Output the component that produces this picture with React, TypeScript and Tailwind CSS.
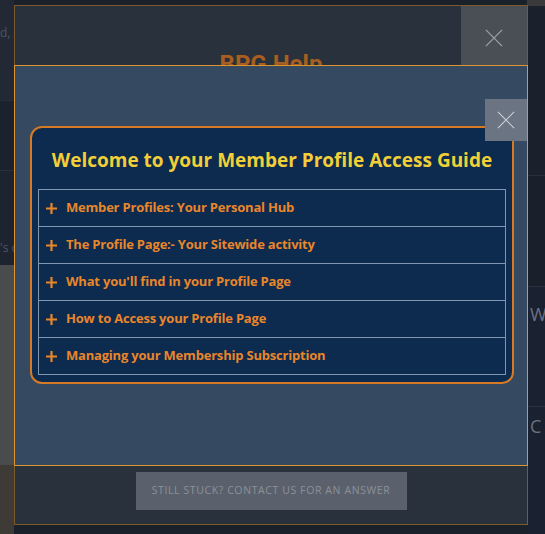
const items = [
  "Member Profiles: Your Personal Hub",
  "The Profile Page:- Your Sitewide activity",
  "What you'll find in your Profile Page",
  "How to Access your Profile Page",
  "Managing your Membership Subscription",
];

function CloseX({ size, color }: { size: number; color: string }) {
  return (
    <svg width={size} height={size} viewBox="0 0 20 20" fill="none">
      <path d="M1 1L19 19M19 1L1 19" stroke={color} strokeWidth="1.3" />
    </svg>
  );
}

function PlusSign() {
  return (
    <svg width="11" height="11" viewBox="0 0 11 11" fill="none" className="shrink-0">
      <path d="M5.5 0V11M0 5.5H11" stroke="#e8862b" strokeWidth="2.2" />
    </svg>
  );
}

export default function App() {
  return (
    <div className="relative w-[545px] h-[534px] overflow-hidden bg-[#1c232e] font-['Open_Sans',sans-serif]">
      {/* page underneath the modals */}
      <div className="flex h-full">
        <div className="w-[14px] flex flex-col overflow-hidden whitespace-nowrap">
          <div className="h-[100px] bg-[#222934] pt-[24px] text-[12px] text-[#4b5563]">d, s</div>
          <div className="h-[70px] bg-[#1b222d] border-t border-[#262d38]"></div>
          <div className="h-[95px] bg-[#1d2430] border-t border-[#2a313b] pt-[68px] text-[12px] text-[#4b5563]">'s c</div>
          <div className="h-[200px] bg-[#4a4b4c]"></div>
          <div className="flex-1 bg-[#3e3b36]"></div>
        </div>
        <div className="flex-1 bg-[#1b212b]"></div>
        <div className="w-[18px] flex flex-col overflow-hidden whitespace-nowrap">
          <div className="h-[6px] bg-[#3b3a3a]"></div>
          <div className="h-[170px] bg-[#1a212c] border-b border-[#2a313b]"></div>
          <div className="h-[110px] bg-[#19202b]"></div>
          <div className="h-[120px] bg-[#1a2130] border-t border-[#2c3340] pt-[18px] pl-[3px] text-[18px] leading-none text-[#6b7280]">W</div>
          <div className="flex-1 bg-[#1a2130] border-t border-[#2c3340] pt-[10px] pl-[3px] text-[18px] leading-none text-[#6b7280]">C</div>
        </div>
      </div>

      {/* outer help modal */}
      <div className="absolute left-[14px] top-[5px] w-[514px] h-[520px] border border-[#7d5a2c] bg-[#29313c] flex flex-col items-center">
        <button className="absolute right-0 top-0 w-[66px] h-[59px] bg-[#4a4e55] flex items-center justify-center pt-[4px]">
          <CloseX size={18} color="#9fa3a9" />
        </button>
        <h2 className="mt-[40px] text-[24px] font-bold text-[#a85e1e] font-['Roboto',sans-serif]">BPG Help</h2>
        <div className="mt-auto mb-[14px]">
          <button className="w-[271px] h-[38px] bg-[#5a616c] text-[10.5px] tracking-[0.6px] whitespace-nowrap text-[#8b9199] uppercase">
            Still stuck? Contact us for an answer
          </button>
        </div>
      </div>

      {/* inner guide modal */}
      <div className="absolute left-[14px] top-[65px] w-[514px] h-[401px] border border-[#df952f] bg-[#354a60] pt-[60px] pl-[15px] pr-[13px]">
        <button className="absolute right-0 top-[33px] w-[42px] h-[42px] bg-[#6b7482] flex items-center justify-center">
          <CloseX size={18} color="#c9cdd3" />
        </button>
        <div className="rounded-[12px] border-2 border-[#d67a26] bg-[#0d2a4f] px-[6px] pt-[20px] pb-[7px]">
          <h1 className="text-center text-[19px] leading-[24px] font-bold text-[#f0cf38] mb-[17px]">
            Welcome to your Member Profile Access Guide
          </h1>
          <div className="border border-[#8096b0] border-b-0">
            {items.map((t) => (
              <div key={t} className="h-[37px] border-b border-[#8096b0] flex items-center pl-[7px] gap-[9px] text-[13px] tracking-[-0.2px] font-bold text-[#e8862b]">
                <PlusSign />
                <span>{t}</span>
              </div>
            ))}
          </div>
        </div>
      </div>
    </div>
  );
}
